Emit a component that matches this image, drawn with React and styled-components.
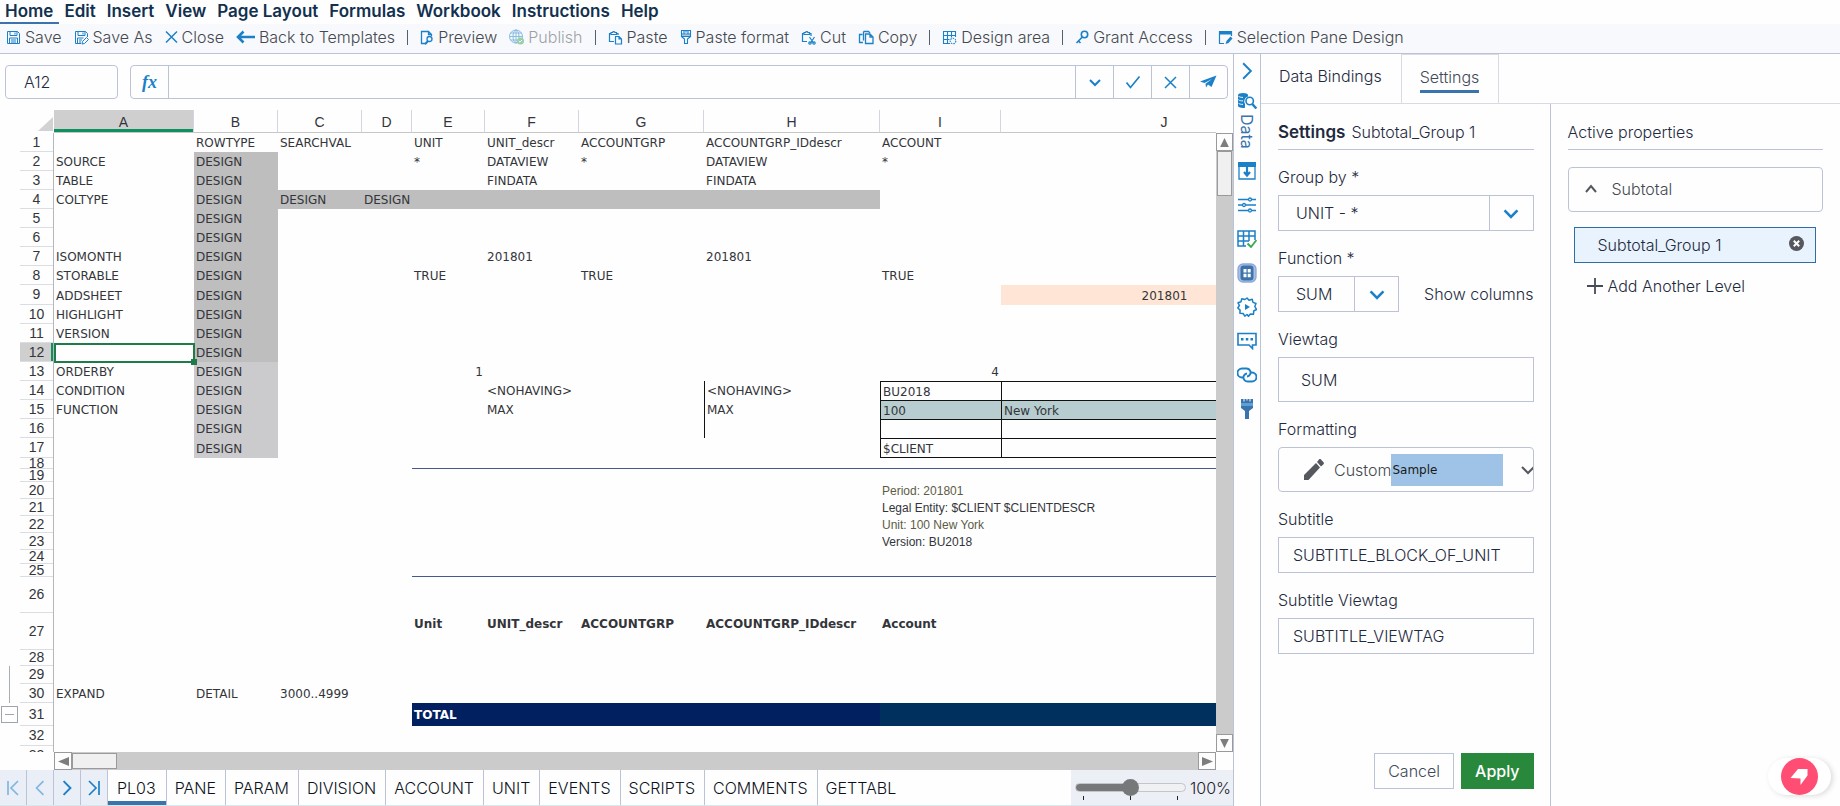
import React from 'react';
import styled, {createGlobalStyle, css} from 'styled-components';

const blue = '#1b80c8';
const line = '#bcc3d6';
const accent = '#3b73ad';

const GlobalStyle = createGlobalStyle`
  * {
    box-sizing: border-box;
  }

  body {
    margin: 0;
    background: #fefefe;
    color: #1f2a40;
    font-family: Inter, "Liberation Sans", sans-serif;
    font-size: 16px;
    font-weight: 300;
  }

  button, input, select {
    margin: 0;
    font: inherit;
    color: inherit;
  }

  svg {
    flex: none;
  }
`;

const Page = styled.div`
  display: flex;
  flex-direction: column;
  height: 100vh;
  overflow: hidden;
`;

const PlainButton = styled.button`
  padding: 0;
  border: 0;
  background: none;
  cursor: pointer;
`;

/* ---------- menu and toolbar ---------- */

const MenuBar = styled.nav`
  display: flex;
  height: 24px;
`;

const MenuItem = styled(PlainButton)`
  padding: 0 6px 0 5px;
  line-height: 20px;
  font-size: 17px;
  font-weight: 600;
  color: #12304f;
  border-bottom: 2px solid ${({$active}) => ($active ? accent : 'transparent')};
`;

const Toolbar = styled.div`
  display: flex;
  align-items: center;
  gap: 12px;
  height: 30px;
  padding: 0 6px 3px;
  background: #f8f9fc;
  border-bottom: 1px solid ${line};
`;

const Tool = styled(PlainButton)`
  display: flex;
  align-items: center;
  gap: 4px;
  color: #45494f;
  white-space: nowrap;
  opacity: ${({disabled}) => (disabled ? 0.5 : 1)};
`;

const Separator = styled.span`
  width: 1px;
  height: 15px;
  background: #55606e;
`;

/* ---------- body ---------- */

const Body = styled.div`
  display: flex;
  flex: 1;
  min-height: 0;
`;

const Workbook = styled.main`
  display: flex;
  flex-direction: column;
  flex: 1;
  min-width: 0;
  border-right: 1px solid ${line};
`;

const FormulaRow = styled.div`
  display: flex;
  gap: 12px;
  padding: 11px 5px;
`;

const NameBox = styled.input`
  width: 113px;
  height: 34px;
  padding: 0 18px;
  border: 1px solid ${line};
  border-radius: 4px;
  background: none;
`;

const FormulaBox = styled.div`
  display: flex;
  flex: 1;
  height: 34px;
  border: 1px solid ${line};
  border-radius: 4px;
`;

const Fx = styled.label`
  width: 38px;
  border-right: 1px solid ${line};
  line-height: 32px;
  text-align: center;
  font-family: "Liberation Serif", serif;
  font-size: 18px;
  font-weight: 700;
  font-style: italic;
  color: ${blue};
`;

const FormulaInput = styled.input`
  flex: 1;
  min-width: 0;
  border: 0;
  background: none;
`;

const FormulaButton = styled(PlainButton)`
  display: flex;
  align-items: center;
  justify-content: center;
  width: 38px;
  border-left: 1px solid ${line};
`;

/* ---------- sheet ---------- */

const SheetArea = styled.div`
  display: grid;
  grid-template-columns: minmax(0, 1fr) 17px;
  grid-template-rows: minmax(0, 1fr) 18px;
  flex: 1;
  min-height: 0;
`;

const SheetView = styled.div`
  overflow: hidden;
`;

const Sheet = styled.table`
  width: 1328px;
  table-layout: fixed;
  border-collapse: separate;
  border-spacing: 0;
  font-family: Verdana, "DejaVu Sans", sans-serif;
  font-size: 12px;
  color: #33353a;

  th, td {
    padding: 0;
    font-weight: 400;
    text-align: left;
    white-space: nowrap;
  }
`;

const ColHead = styled.th`
  && {
    height: 23px;
    padding-top: 2px;
    font-family: "Liberation Sans", Arial, sans-serif;
    font-size: 14px;
    line-height: 18px;
    text-align: center;
    border-right: 1px solid #d3d6e0;
    border-bottom: 1px solid #c6c6c6;
    ${({$active}) => $active && css`
      background: #cfcfcf;
      box-shadow: inset 0 -3px #0f9060;
    `}
  }
`;

const Corner = styled.th`
  && {
    padding: 5px 1px 0 0;
    text-align: right;
    line-height: 0;
  }
`;

const RowHead = styled.th`
  && {
    font-family: "Liberation Sans", Arial, sans-serif;
    font-size: 14px;
    line-height: 11px;
    border-right: 1px solid #b5b7bd;
    ${({$active}) => $active && css`
      background: #cfcfcf;
      box-shadow: inset -2px 0 #0f9060;
    `}
  }
`;

const RowNumber = styled.div`
  display: flex;
  align-items: center;
  justify-content: center;
  height: ${({$h}) => $h}px;
  overflow: hidden;
  border-bottom: 1px solid #dcdde2;
`;

const OutlineCell = styled.td`
  vertical-align: middle;
  line-height: 0;
  background: ${({$line}) => ($line ? 'linear-gradient(#a9adb5, #a9adb5) 9px 0 / 1px 100% no-repeat' : 'none')};
`;

const OutlineButton = styled(PlainButton)`
  display: flex;
  align-items: center;
  justify-content: center;
  width: 17px;
  height: 17px;
  margin-left: 1px;
  border: 1px solid #a0a4ac;

  &::before {
    content: '';
    width: 9px;
    height: 1px;
    background: #a0a4ac;
  }
`;

const Cell = styled.td`
  position: ${({$selected}) => ($selected ? 'relative' : 'static')};
  vertical-align: ${({$top}) => ($top ? 'top' : 'middle')};
  background: ${({$bg}) => $bg || 'none'};
  border-style: solid;
  border-color: ${({$stroke}) => $stroke || '#111'};
  border-width: ${({$edges}) => $edges || '0'};

  ${({$selected}) => $selected && css`
    &::before {
      content: '';
      position: absolute;
      inset: 0 -1px -1px 0;
      border: 2px solid #1f7b48;
    }

    &::after {
      content: '';
      position: absolute;
      right: -3px;
      bottom: -3px;
      width: 6px;
      height: 6px;
      background: #1f7b48;
    }
  `}
`;

const CellText = styled.div`
  padding: ${({$top}) => ($top ? 1 : 2)}px 2px 0;
  line-height: ${({$top}) => ($top ? 20 : 11)}px;
  text-align: ${({$align}) => $align || 'left'};
  font-weight: ${({$bold}) => ($bold ? 700 : 400)};
  color: ${({$color}) => $color || 'inherit'};
  font-family: ${({$arial}) => ($arial ? '"Liberation Sans", Arial, sans-serif' : 'inherit')};
`;

const VScroll = styled.div`
  display: flex;
  flex-direction: column;
  margin-top: 23px;
  background: #cbcbcb;
`;

const HScroll = styled.div`
  display: flex;
  margin-left: 54px;
  background: #cbcbcb;
`;

const ScrollButton = styled(PlainButton)`
  display: flex;
  align-items: center;
  justify-content: center;
  width: ${({$wide}) => ($wide ? 18 : 17)}px;
  height: 18px;
  background: #fdfdfd;
  border: 1px solid #9a9a9e;
`;

const Thumb = styled.div`
  ${({$vertical}) => ($vertical ? css`
    height: 45px;
    margin: 0 1px auto;
  ` : css`
    width: 45px;
    margin: 1px auto 1px 0;
  `)}
  background: #f0f0f0;
  border: 1px solid #9a9a9e;
`;

/* ---------- sheet tabs ---------- */

const TabBar = styled.div`
  display: flex;
  height: 36px;
  border-bottom: 1px solid #d5e7ef;
`;

const TabNav = styled(PlainButton)`
  display: flex;
  align-items: center;
  justify-content: center;
  width: 27px;
  background: #eaeff7;
  border-right: 1px solid ${line};

  svg {
    opacity: ${({disabled}) => (disabled ? 0.5 : 1)};
  }
`;

const SheetTab = styled(PlainButton)`
  padding: 0 9px 0 8px;
  color: #0c121c;
  border-right: 1px solid ${({$last}) => ($last ? 'transparent' : line)};
  ${({$active}) => $active && css`
    padding: 0 10px 0 9px;
    box-shadow: inset 0 -4px ${accent};
  `}
`;

const ZoomBox = styled.div`
  display: flex;
  align-items: center;
  gap: 4px;
  width: 162px;
  margin-left: auto;
  padding-left: 4px;
  background: #eceff6;
  color: #1d2127;
`;

const SliderWrap = styled.div`
  flex: 0 0 111px;
  padding-top: 4px;
`;

const Slider = styled.input`
  display: block;
  width: 100%;
  height: 17px;
  appearance: none;
  background: none;

  &::-webkit-slider-runnable-track {
    height: 9px;
    border: 1px solid #c3c5c8;
    border-radius: 5px;
    background: linear-gradient(90deg, #77787a 50%, #eff1f3 50%);
  }

  &::-webkit-slider-thumb {
    appearance: none;
    width: 17px;
    height: 17px;
    margin-top: -5px;
    border-radius: 50%;
    background: #77787a;
  }
`;

const Ticks = styled.div`
  display: flex;
  justify-content: space-between;
  padding: 0 8px;

  span {
    width: 1px;
    height: 4px;
    background: #222;
  }
`;

/* ---------- icon strip ---------- */

const Strip = styled.aside`
  display: flex;
  flex-direction: column;
  align-items: center;
  width: 27px;
  border-right: 1px solid ${line};
`;

const StripButton = styled(PlainButton)`
  display: flex;
  align-items: center;
  justify-content: center;
  width: 26px;
  height: 34px;
`;

const DataButton = styled(PlainButton)`
  display: flex;
  flex-direction: column;
  align-items: center;
  gap: 4px;
  height: 66px;
  padding-top: 4px;
  color: ${accent};

  span {
    writing-mode: vertical-rl;
    line-height: 18px;
    font-weight: 400;
  }
`;

/* ---------- settings panel ---------- */

const Panel = styled.section`
  display: flex;
  flex-direction: column;
  width: 579px;
`;

const PanelTabs = styled.div`
  display: flex;
  height: 50px;
  border-bottom: 1px solid #d9dbe4;
`;

const PanelTab = styled(PlainButton)`
  display: flex;
  align-items: center;
  padding: 0 19px 2px 18px;
  border: solid #d9dbe4;
  border-width: ${({$active}) => ($active ? '1px 1px 0' : '0')};
  color: ${({$active}) => ($active ? '#424a59' : '#1f2a40')};

  span {
    line-height: 26px;
    border-bottom: 3px solid ${({$active}) => ($active ? accent : 'transparent')};
  }
`;

const PanelBody = styled.div`
  display: grid;
  grid-template-columns: minmax(0, 1fr) minmax(0, 1fr);
  flex: 1;
  min-height: 0;
`;

const Column = styled.div`
  display: flex;
  flex-direction: column;
  gap: 17px;
  padding: ${({$divided}) => ($divided ? '17px 16px 17px 17px' : '17px')};
  border-right: ${({$divided}) => ($divided ? `1px solid ${line}` : '0')};
`;

const Heading = styled.h2`
  margin: 0;
  padding-bottom: 6px;
  border-bottom: 1px solid ${line};
  font-size: 16px;
  font-weight: 300;
  line-height: 22px;

  strong {
    font-size: 17px;
    font-weight: 600;
    margin-right: 6px;
  }
`;

const Field = styled.div`
  display: flex;
  flex-direction: column;
  gap: 8px;
`;

const Label = styled.label`
  line-height: 20px;
`;

const TextInput = styled.input`
  width: 100%;
  height: ${({$tall}) => ($tall ? 45 : 36)}px;
  padding: 0 ${({$tall}) => ($tall ? 22 : 14)}px;
  border: 1px solid ${line};
  background: none;
`;

const SelectBox = styled.div`
  display: flex;
  width: ${({$small}) => ($small ? '121px' : '100%')};
  height: 36px;
  border: 1px solid ${line};
`;

const Select = styled.select`
  flex: 1;
  min-width: 0;
  padding: 0 0 0 17px;
  appearance: none;
  border: 0;
  background: none;
`;

const SelectArrow = styled.span`
  display: flex;
  align-items: center;
  justify-content: center;
  width: 44px;
  border-left: 1px solid ${line};
`;

const FieldRow = styled.div`
  display: flex;
  align-items: center;
  justify-content: space-between;
`;

const FormatButton = styled(PlainButton)`
  display: flex;
  align-items: center;
  height: 45px;
  padding-left: 25px;
  overflow: hidden;
  border: 1px solid ${line};
  border-radius: 4px;
  color: #45494f;
`;

const FormatName = styled.span`
  margin-left: 10px;
`;

const Sample = styled.span`
  flex: 0 0 112px;
  height: 32px;
  margin-right: 18px;
  padding-left: 1px;
  background: #9fc3e6;
  font: 12px/32px "DejaVu Sans", sans-serif;
  text-align: left;
  color: #1a1a1a;
`;

const Actions = styled.div`
  display: flex;
  justify-content: flex-end;
  gap: 7px;
  margin-top: auto;
`;

const ActionButton = styled(PlainButton)`
  height: 36px;
  padding: 0 13px;
  border: 1px solid ${({$primary}) => ($primary ? '#28893d' : line)};
  background: ${({$primary}) => ($primary ? '#28893d' : 'none')};
  color: ${({$primary}) => ($primary ? '#fff' : '#424a59')};
  font-weight: ${({$primary}) => ($primary ? 500 : 300)};
`;

const Properties = styled.div`
  display: flex;
  flex-direction: column;
  gap: 15px;
`;

const Group = styled(PlainButton)`
  display: flex;
  align-items: center;
  gap: 14px;
  height: 45px;
  padding: 0 15px 2px;
  border: 1px solid ${line};
  border-radius: 4px;
  color: #45494f;
`;

const Levels = styled.div`
  display: flex;
  flex-direction: column;
  gap: 13px;
  padding: 0 7px 0 6px;
`;

const Level = styled.div`
  display: flex;
  align-items: center;
  justify-content: space-between;
  height: 36px;
  padding: 0 11px 0 23px;
  border: 1px solid #2d6ea8;
  background: #e8f3fd;
`;

const AddLevel = styled(PlainButton)`
  display: flex;
  align-items: center;
  gap: 5px;
  padding-left: 13px;
`;

const HelpPill = styled(PlainButton)`
  position: fixed;
  right: 9px;
  bottom: 11px;
  display: flex;
  justify-content: center;
  width: 63px;
  height: 37px;
  border-radius: 19px;
  background: #fff;
  box-shadow: 2px 1px 5px rgba(60, 60, 80, 0.18);
`;

/* ---------- icons ---------- */

const Icon = ({w = 16, h = 16, box, color = blue, sw = 1.3, children}) => (
  <svg width={w} height={h} viewBox={box || `0 0 ${w} ${h}`} fill="none" stroke={color}
    strokeWidth={sw} aria-hidden="true">
    {children}
  </svg>
);

const Chevron = ({dir = 'down', size = 14, color, sw = 2}) => {
  const paths = {
    down: 'M2 5l5 5 5-5',
    up: 'M2 10l5-6 5 6',
    left: 'M10 1L4 7l6 6',
    right: 'M4 1l6 6-6 6',
  };
  return <Icon w={size} h={size} box="0 0 14 14" color={color} sw={sw}><path d={paths[dir]} /></Icon>;
};

const icons = {
  save: (
    <Icon w={15} h={15} sw={1}>
      <path d="M1.5 1.5h10l2 2v10h-12z M4 1.5v4h7v-4 M3.5 13.5v-5.5h8v5.5 M5 10h5 M5 12h5 M9 2.5v2" />
    </Icon>
  ),
  saveAs: (
    <Icon w={15} h={15} sw={1}>
      <path d="M7 13.5H1.5v-12h10l2 2V7 M4 1.5v4h7v-4 M3.5 13.5v-5.5h6 M5 10h3 M5 12h2 M9 2.5v2" />
      <path d="M8 14l.5-2.5L12.5 7.5l2 2-4 4z" />
    </Icon>
  ),
  close: <Icon w={13} h={14} sw={1.5}><path d="M1 1.5l11 11 M12 1.5l-11 11" /></Icon>,
  back: <Icon w={19} h={14} sw={2.6}><path d="M19 7H2 M7.5 1.5L2 7l5.5 5.5" /></Icon>,
  preview: (
    <Icon w={14} h={15}>
      <path d="M5 13.5H1.5v-12h7l3 3V6 M8.5 1.5v3h3" />
      <circle cx="9.5" cy="9" r="2.5" />
      <path d="M8 11l-3 3.2" strokeWidth="2" />
    </Icon>
  ),
  publish: (
    <Icon w={15} h={16} sw={1}>
      <circle cx="7" cy="7.5" r="6.5" />
      <ellipse cx="7" cy="7.5" rx="3" ry="6.5" />
      <path d="M.5 7.5h13 M1.5 4h11 M1.5 11h11 M7 1v13" />
      <circle cx="11.5" cy="12" r="3.5" fill="#3aa655" stroke="none" />
      <path d="M9.8 12l1.2 1.2 2-2.2" stroke="#fff" />
    </Icon>
  ),
  paste: (
    <Icon w={15} h={15} sw={1.2}>
      <path d="M6 11.5H1.5v-8H3 M8.5 3.5H10V5 M3 4.5v-2h1.5a1.3 1.3 0 0 1 2.5 0h1.5v2z" />
      <path d="M7.5 6.5h3.5l2.5 2.5v5h-6z M11 6.5V9h2.5" />
    </Icon>
  ),
  pasteFormat: (
    <Icon w={12} h={16} sw={1.1}>
      <path d="M1.5 1.5h9v6h-9z M1.5 5h9 M1.5 7.5l3 2.5v4.5h3V10l3-2.5 M4 1.5V5 M6 1.5V3.5 M8 1.5V5" />
      <path d="M2 5.5h8v2H2z" fill={blue} stroke="none" opacity="0.4" />
    </Icon>
  ),
  cut: (
    <Icon w={15} h={15} sw={1.2}>
      <path d="M6 11.5H1.5v-8H3 M8.5 3.5H10V6 M3 4.5v-2h1.5a1.3 1.3 0 0 1 2.5 0h1.5v2z" />
      <path d="M8.5 7l4 6 M13.5 7l-4 6" />
      <circle cx="9" cy="13" r="1.2" />
      <circle cx="13" cy="13" r="1.2" />
    </Icon>
  ),
  copy: (
    <Icon w={16} h={15}>
      <path d="M5 12.5H1.5v-8h3" />
      <path d="M5.5 1.5h5l1.5 1.5 M5.5 1.5v9" />
      <path d="M7.5 4h4.5l3 3v6.5h-7.5z M12 4v3h3" />
    </Icon>
  ),
  design: (
    <Icon w={15} h={15} sw={1.1}>
      <path d="M8 13.5H1.5v-12h12V7 M5.5 1.5v12 M9.5 1.5v6 M1.5 5.5h12 M1.5 9.5h6" />
      <circle cx="11" cy="11" r="2.8" strokeDasharray="1.5 1" />
    </Icon>
  ),
  grant: (
    <Icon w={14} h={15} sw={1.6}>
      <circle cx="9.5" cy="4.5" r="3.2" />
      <path d="M7.3 7L1.5 13 M3.5 11l2 2" />
    </Icon>
  ),
  selection: (
    <Icon w={15} h={15} sw={1.2}>
      <path d="M6 13.5H1.5v-12h12V6" />
      <path d="M1 1h13v3.5H1z" fill={blue} stroke="none" />
      <path d="M7.5 14l1-3L12.5 6.5l2 2-4 4.5z" fill={blue} stroke="none" />
    </Icon>
  ),
  data: (
    <Icon w={20} h={18} sw={1.3}>
      <path d="M1 3c0-1.3 2.2-2 5-2s5 .7 5 2v1.5a5 5 0 0 0-3 7.5v3.8c-.6.2-1.3.2-2 .2-2.8 0-5-.9-5-2.2z" fill={blue} stroke="none" />
      <path d="M1.5 4.3c1 .8 2.5 1.1 4.5 1.1 M1.5 7.8c1 .8 2.5 1.1 4.5 1.1 M1.5 11.3c1 .8 2.5 1.1 4.5 1.1" stroke="#fff" strokeWidth="1" />
      <circle cx="12.7" cy="9" r="3.7" fill="#fefefe" strokeWidth="1.6" />
      <path d="M15.3 12l4 4.5" strokeWidth="2.4" />
    </Icon>
  ),
};

const stripIcons = [
  ['Import', (
    <Icon w={18} h={18}>
      <path d="M1 1h16v16H1z" />
      <path d="M9 5v8 M6 10l3 3.5 3-3.5" strokeWidth="2.2" />
      <path d="M0 0h18v5H0z" fill={blue} stroke="none" />
    </Icon>
  )],
  ['Filters', (
    <Icon w={18} h={16}>
      <path d="M0 2.5h10 M14 2.5h4 M0 8h4 M8 8h10 M0 13.5h10 M14 13.5h4" />
      <circle cx="12" cy="2.5" r="1.5" />
      <circle cx="6" cy="8" r="1.5" />
      <circle cx="12" cy="13.5" r="1.5" />
    </Icon>
  )],
  ['Validate', (
    <Icon w={20} h={18}>
      <path d="M9 16H1V1h17v9 M6.5 1v15 M12 1v10 M1 6h17 M1 11h11" strokeWidth="1.5" />
      <path d="M10.5 13.5l3.5 3.5 5.5-7" stroke="#3aa655" strokeWidth="1.8" />
    </Icon>
  )],
  ['Elements', (
    <Icon w={20} h={20}>
      <rect x="1" y="1" width="18" height="18" rx="5" fill="#a9bfe2" stroke="#8ea9d6" />
      <rect x="3.5" y="2.5" width="13" height="15" rx="3" fill={accent} stroke="none" />
      <path d="M6.5 6h3v3.5h-3z M10.7 6h3v3.5h-3z M6.5 10.7h3v3.5h-3z M10.7 10.7h3v3.5h-3z" fill="#fff" stroke="none" />
    </Icon>
  )],
  ['Actions', (
    <Icon w={20} h={20} sw={1.5}>
      <path d="M10 1l2 2.2 3.2-1 .8 3.200 3 1.100-1.200 3 1.700 3-2.800 1.500-.2 3.200-3.200-.2L11.500 19.300 10 17.500l-2.200 1.600-1.700-2.600-3.200-.2.200-3.200L.8 11l1.600-2.500L1 5.800l3-1.100.8-3 3.200.8z" strokeLinejoin="round" />
      <path d="M8 7l5 3-5 3z" fill={blue} stroke="none" />
    </Icon>
  )],
  ['Comments', (
    <Icon w={20} h={18} sw={1.6}>
      <path d="M1 1.5h18v11.5h-3.5V16.5L12 13H1z" />
      <path d="M4 6h2.5v2.5H4z M8.8 6h2.5v2.5H8.8z M13.5 6H16v2.5h-2.5z" fill={blue} stroke="none" />
    </Icon>
  )],
  ['Links', (
    <Icon w={20} h={16} sw={1.9}>
      <path d="M6.5 10.500H5A4 4 0 0 1 5 1.5h4.500a4 4 0 0 1 3.5 6 4 4 0 0 1-3 2" />
      <path d="M13.5 5.5H15a4 4 0 0 1 0 9h-4.500a4 4 0 0 1-3.5-6 4 4 0 0 1 3-2" />
    </Icon>
  )],
  ['Format', (
    <Icon w={14} h={20} sw={1}>
      <path d="M1 0h12v9l-4 3v8H5v-8L1 9z" fill={accent} stroke="none" />
      <path d="M1 4h12v3H1z" fill="#5f9fd6" stroke="none" />
      <path d="M4 0v2.5 M7 0v1.5 M10 0v2.5" stroke="#fff" />
    </Icon>
  )],
];

const Triangle = ({points}) => (
  <svg width="11" height="11" viewBox="0 0 10 10" aria-hidden="true">
    <polygon points={points} fill="#7d7d80" />
  </svg>
);

/* ---------- data ---------- */

const menus = ['Home', 'Edit', 'Insert', 'View', 'Page Layout', 'Formulas', 'Workbook', 'Instructions', 'Help'];

const tools = [
  ['Save', 'save'],
  ['Save As', 'saveAs'],
  ['Close', 'close'],
  ['Back to Templates', 'back'],
  null,
  ['Preview', 'preview'],
  ['Publish', 'publish'],
  null,
  ['Paste', 'paste'],
  ['Paste format', 'pasteFormat'],
  ['Cut', 'cut'],
  ['Copy', 'copy'],
  null,
  ['Design area', 'design'],
  null,
  ['Grant Access', 'grant'],
  null,
  ['Selection Pane Design', 'selection'],
];

const columns = [
  ['A', 140], ['B', 84], ['C', 84], ['D', 50], ['E', 73],
  ['F', 94], ['G', 125], ['H', 176], ['I', 121], ['J', 327],
];

const heights = [
  19, 19, 19, 19, 19, 19, 19, 19, 20, 19, 19, 19, 19, 19, 19, 19, 20,
  11, 13, 17, 17, 17, 17, 14, 13, 36, 37, 16, 18, 19, 23, 20, 19,
];

const values = {
  B1: 'ROWTYPE', C1: 'SEARCHVAL', E1: 'UNIT', F1: 'UNIT_descr', G1: 'ACCOUNTGRP',
  H1: 'ACCOUNTGRP_IDdescr', I1: 'ACCOUNT',
  A2: 'SOURCE', E2: '*', F2: 'DATAVIEW', G2: '*', H2: 'DATAVIEW', I2: '*',
  A3: 'TABLE', F3: 'FINDATA', H3: 'FINDATA',
  A4: 'COLTYPE', C4: 'DESIGN', D4: 'DESIGN',
  A7: 'ISOMONTH', F7: '201801', H7: '201801',
  A8: 'STORABLE', E8: 'TRUE', G8: 'TRUE', I8: 'TRUE',
  A9: 'ADDSHEET', J9: '201801',
  A10: 'HIGHLIGHT', A11: 'VERSION',
  A13: 'ORDERBY', E13: '1', I13: '4',
  A14: 'CONDITION', F14: '<NOHAVING>', H14: '<NOHAVING>', I14: 'BU2018',
  A15: 'FUNCTION', F15: 'MAX', H15: 'MAX', I15: '100', J15: 'New York',
  I17: '$CLIENT',
  I20: 'Period: 201801', I21: 'Legal Entity: $CLIENT $CLIENTDESCR',
  I22: 'Unit: 100 New York', I23: 'Version: BU2018',
  E27: 'Unit', F27: 'UNIT_descr', G27: 'ACCOUNTGRP', H27: 'ACCOUNTGRP_IDdescr', I27: 'Account',
  A30: 'EXPAND', B30: 'DETAIL', C30: '3000..4999',
  E31: 'TOTAL',
};

const alignments = {E13: 'right', I13: 'right', J9: 'center'};

const sheets = ['PL03', 'PANE', 'PARAM', 'DIVISION', 'ACCOUNT', 'UNIT', 'EVENTS', 'SCRIPTS', 'COMMENTS', 'GETTABL'];

const cellValue = (col, row) => {
  if (col === 'B' && row >= 2 && row <= 17) return 'DESIGN';
  return values[col + row];
};

const cellFill = (col, row) => {
  if (col === 'B' && row >= 2 && row <= 12) return '#bebebe';
  if (col === 'B' && row >= 13 && row <= 17) return '#cbcbcd';
  if (row === 4 && col >= 'C' && col <= 'H') return '#bebebe';
  if (row === 9 && col === 'J') return '#fee5d5';
  if (row === 15 && col >= 'I') return '#b8cdcf';
  if (row === 31 && col >= 'I') return '#00305e';
  if (row === 31 && col >= 'E') return '#00205f';
  return undefined;
};

const cellEdges = (col, row) => {
  if (col >= 'I' && row >= 14 && row <= 16) return '1px 0 0 1px';
  if (col >= 'I' && row === 17) return '1px 0 1px 1px';
  if (col === 'H' && row >= 14 && row <= 16) return '0 0 0 1px';
  if (col >= 'E' && (row === 18 || row === 25)) return '0 0 1px';
  return undefined;
};

const SheetCell = ({col, row}) => {
  const value = cellValue(col, row);
  const top = row === 27;
  const arial = row >= 20 && row <= 23;
  let color;
  if (row === 31) color = '#fff';
  if (row === 20 || row === 22) color = '#5c5c45';

  return (
    <Cell
      $bg={cellFill(col, row)}
      $edges={cellEdges(col, row)}
      $stroke={row === 18 || row === 25 ? '#44598f' : undefined}
      $selected={col === 'A' && row === 12}
      $top={top}
    >
      {value && (
        <CellText $align={alignments[col + row]} $bold={top || row === 31} $top={top} $arial={arial} $color={color}>
          {value}
        </CellText>
      )}
    </Cell>
  );
};

const SheetTable = () => (
  <Sheet>
    <colgroup>
      <col width="20" />
      <col width="34" />
      {columns.map(([name, width]) => <col key={name} width={width} />)}
    </colgroup>
    <thead>
      <tr>
        <td />
        <Corner>
          <svg width="15" height="14" aria-hidden="true"><polygon points="15,0 15,14 0,14" fill="#d2d2d4" /></svg>
        </Corner>
        {columns.map(([name]) => <ColHead key={name} scope="col" $active={name === 'A'}>{name}</ColHead>)}
      </tr>
    </thead>
    <tbody>
      {heights.map((height, i) => {
        const row = i + 1;
        return (
          <tr key={row}>
            <OutlineCell $line={row === 29 || row === 30}>
              {row === 31 && <OutlineButton aria-label="Collapse rows" />}
            </OutlineCell>
            <RowHead scope="row" $active={row === 12}><RowNumber $h={height}>{row}</RowNumber></RowHead>
            {columns.map(([name]) => <SheetCell key={name} col={name} row={row} />)}
          </tr>
        );
      })}
    </tbody>
  </Sheet>
);

const SettingsForm = () => (
  <Column as="form" $divided>
    <Heading><strong>Settings</strong>Subtotal_Group 1</Heading>
    <Field>
      <Label htmlFor="group-by">Group by *</Label>
      <SelectBox>
        <Select id="group-by"><option>UNIT - *</option></Select>
        <SelectArrow><Chevron size={18} /></SelectArrow>
      </SelectBox>
    </Field>
    <Field>
      <Label htmlFor="function">Function *</Label>
      <FieldRow>
        <SelectBox $small>
          <Select id="function"><option>SUM</option></Select>
          <SelectArrow><Chevron size={18} /></SelectArrow>
        </SelectBox>
        <PlainButton type="button">Show columns</PlainButton>
      </FieldRow>
    </Field>
    <Field>
      <Label htmlFor="viewtag">Viewtag</Label>
      <TextInput id="viewtag" $tall defaultValue="SUM" />
    </Field>
    <Field>
      <Label as="span" id="formatting">Formatting</Label>
      <FormatButton type="button" aria-describedby="formatting">
        <Icon w={20} h={21} color="none">
          <path d="M0 21v-5L12 4l4 4.5L4.5 21z M13 3l2-2.5c.6-.6 1.3-.6 2 0l2.5 2.7c.6.6.6 1.3 0 2L17 7.5z" fill="#55585e" />
        </Icon>
        <FormatName>Custom</FormatName>
        <Sample>Sample</Sample>
        <Icon w={16} h={14} color="#55585e" sw={2}><path d="M1 4l6 6 6-6" /></Icon>
      </FormatButton>
    </Field>
    <Field>
      <Label htmlFor="subtitle">Subtitle</Label>
      <TextInput id="subtitle" defaultValue="SUBTITLE_BLOCK_OF_UNIT" />
    </Field>
    <Field>
      <Label htmlFor="subtitle-viewtag">Subtitle Viewtag</Label>
      <TextInput id="subtitle-viewtag" defaultValue="SUBTITLE_VIEWTAG" />
    </Field>
    <Actions>
      <ActionButton type="button">Cancel</ActionButton>
      <ActionButton type="button" $primary>Apply</ActionButton>
    </Actions>
  </Column>
);

const ActiveProperties = () => (
  <Column>
    <Heading>Active properties</Heading>
    <Properties>
      <Group><Chevron dir="up" color="#55585e" />Subtotal</Group>
      <Levels>
        <Level>
          Subtotal_Group 1
          <PlainButton aria-label="Remove level">
            <Icon w={15} h={15} color="#fff" sw={2}>
              <circle cx="7.5" cy="7.5" r="7.5" fill="#55585e" stroke="none" />
              <path d="M4.8 4.8l5.4 5.4 M10.2 4.8l-5.4 5.4" />
            </Icon>
          </PlainButton>
        </Level>
        <AddLevel>
          <Icon color="#454c58" sw={1.8}><path d="M8 0v16 M0 8h16" /></Icon>
          Add Another Level
        </AddLevel>
      </Levels>
    </Properties>
  </Column>
);

const App = () => {
  return (
    <Page>
      <GlobalStyle />
      <MenuBar>
        {menus.map((name) => <MenuItem key={name} $active={name === 'Home'}>{name}</MenuItem>)}
      </MenuBar>
      <Toolbar>
        {tools.map((tool, i) => (tool ? (
          <Tool key={tool[1]} disabled={tool[1] === 'publish'}>{icons[tool[1]]}{tool[0]}</Tool>
        ) : <Separator key={i} />))}
      </Toolbar>
      <Body>
        <Workbook>
          <FormulaRow>
            <NameBox aria-label="Cell name" defaultValue="A12" />
            <FormulaBox>
              <Fx htmlFor="formula">fx</Fx>
              <FormulaInput id="formula" />
              <FormulaButton aria-label="Expand"><Chevron size={14} /></FormulaButton>
              <FormulaButton aria-label="Accept">
                <Icon w={16} h={14} sw={1.7}><path d="M1.5 7.5l4 5L14.5 1.5" /></Icon>
              </FormulaButton>
              <FormulaButton aria-label="Reject">
                <Icon w={13} h={13} sw={1.5}><path d="M1 1l11 11 M12 1L1 12" /></Icon>
              </FormulaButton>
              <FormulaButton aria-label="Send">
                <Icon w={17} h={14} color="none">
                  <path d="M0 6.5L16.5 0.5 11.5 12 8 9.5 6 12.5 5.5 8.8 12 4 4.5 8z" fill={blue} />
                </Icon>
              </FormulaButton>
            </FormulaBox>
          </FormulaRow>
          <SheetArea>
            <SheetView><SheetTable /></SheetView>
            <VScroll>
              <ScrollButton aria-label="Scroll up"><Triangle points="5,1 9,9 1,9" /></ScrollButton>
              <Thumb $vertical />
              <ScrollButton aria-label="Scroll down"><Triangle points="1,1 9,1 5,9" /></ScrollButton>
            </VScroll>
            <HScroll>
              <ScrollButton $wide aria-label="Scroll left"><Triangle points="0,5 10,1 10,9" /></ScrollButton>
              <Thumb />
              <ScrollButton $wide aria-label="Scroll right"><Triangle points="0,1 10,5 0,9" /></ScrollButton>
            </HScroll>
          </SheetArea>
          <TabBar>
            <TabNav disabled aria-label="First sheet">
              <Icon w={14} h={16} sw={1.7}><path d="M2 1v14 M12 1L5 8l7 7" /></Icon>
            </TabNav>
            <TabNav disabled aria-label="Previous sheet"><Chevron dir="left" size={16} sw={1.5} /></TabNav>
            <TabNav aria-label="Next sheet"><Chevron dir="right" size={16} sw={1.7} /></TabNav>
            <TabNav aria-label="Last sheet">
              <Icon w={14} h={16} sw={1.7}><path d="M12 1v14 M2 1l7 7-7 7" /></Icon>
            </TabNav>
            {sheets.map((name, i) => (
              <SheetTab key={name} $active={i === 0} $last={i === sheets.length - 1}>{name}</SheetTab>
            ))}
            <ZoomBox>
              <SliderWrap>
                <Slider type="range" min="0" max="200" defaultValue="100" aria-label="Zoom" />
                <Ticks><span /><span /><span /></Ticks>
              </SliderWrap>
              100%
            </ZoomBox>
          </TabBar>
        </Workbook>
        <Strip>
          <StripButton aria-label="Collapse panel"><Chevron dir="right" size={18} sw={1.5} /></StripButton>
          <DataButton>{icons.data}<span>Data</span></DataButton>
          {stripIcons.map(([name, icon]) => <StripButton key={name} aria-label={name}>{icon}</StripButton>)}
        </Strip>
        <Panel>
          <PanelTabs>
            <PanelTab><span>Data Bindings</span></PanelTab>
            <PanelTab $active><span>Settings</span></PanelTab>
          </PanelTabs>
          <PanelBody>
            <SettingsForm />
            <ActiveProperties />
          </PanelBody>
        </Panel>
      </Body>
      <HelpPill aria-label="Help">
        <Icon w={37} h={37} color="none">
          <circle cx="18.5" cy="18.5" r="18.5" fill="#ff4d73" />
          <path d="M9.5 20l7.5-9h9.5v6.5L19.5 27v-6.5z" fill="#fff" />
        </Icon>
      </HelpPill>
    </Page>
  );
};

export default App;
